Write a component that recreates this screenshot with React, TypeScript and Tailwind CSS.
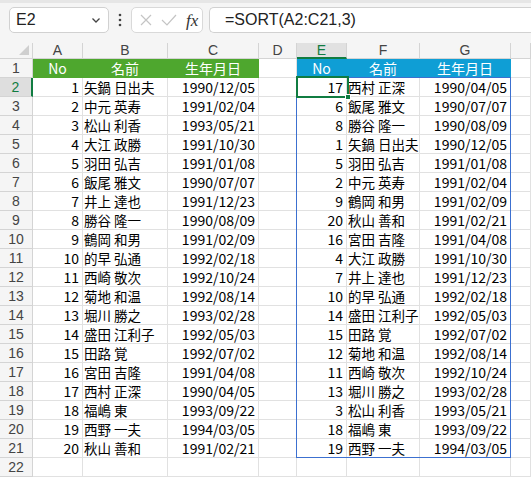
import React from "react";

type Row = [number, string, string];

const left: Row[] = [
  [1, "矢鍋 日出夫", "1990/12/05"],
  [2, "中元 英寿", "1991/02/04"],
  [3, "松山 利香", "1993/05/21"],
  [4, "大江 政勝", "1991/10/30"],
  [5, "羽田 弘吉", "1991/01/08"],
  [6, "飯尾 雅文", "1990/07/07"],
  [7, "井上 達也", "1991/12/23"],
  [8, "勝谷 隆一", "1990/08/09"],
  [9, "鶴岡 和男", "1991/02/09"],
  [10, "的早 弘通", "1992/02/18"],
  [11, "西崎 敬次", "1992/10/24"],
  [12, "菊地 和温", "1992/08/14"],
  [13, "堀川 勝之", "1993/02/28"],
  [14, "盛田 江利子", "1992/05/03"],
  [15, "田路 覚", "1992/07/02"],
  [16, "宮田 吉隆", "1991/04/08"],
  [17, "西村 正深", "1990/04/05"],
  [18, "福嶋 東", "1993/09/22"],
  [19, "西野 一夫", "1994/03/05"],
  [20, "秋山 善和", "1991/02/21"],
];

const right: Row[] = [...left].sort((a, b) => (a[2] < b[2] ? -1 : 1));

const colLetters = ["A", "B", "C", "D", "E", "F", "G", ""];

const cell = "border-r border-b border-[#e1e1e1] flex items-center whitespace-nowrap overflow-hidden";

function DataCells({ row }: { row: Row }) {
  return (
    <>
      <div className={`${cell} justify-end pr-[3px]`}>{row[0]}</div>
      <div className={`${cell} justify-start pl-[1px] text-[13.5px]`}>{row[1]}</div>
      <div className={`${cell} justify-end pr-[3px]`}>{row[2]}</div>
    </>
  );
}

function HeaderCells({ color }: { color: "green" | "blue" }) {
  const bg = color === "green" ? "bg-[#4ea72e]" : "bg-[#0f9ed5]";
  const c = `border-r border-b border-transparent flex items-center justify-center text-white ${bg}`;
  return (
    <>
      <div className={c}>No</div>
      <div className={c}>名前</div>
      <div className={c}>生年月日</div>
    </>
  );
}

export default function App() {
  const rows = Array.from({ length: 22 }, (_, i) => i + 1);
  return (
    <div
      className="w-[531px] h-[478px] overflow-hidden bg-white text-[14px] text-black"
      style={{ fontFamily: '"Noto Sans CJK JP", "Noto Sans", sans-serif' }}
    >
      {/* Formula bar */}
      <div className="h-[43px] bg-[#f5f5f5] border-t-[3px] border-[#e6e6e6] flex items-start pt-[4px]">
        <div className="ml-[9px] w-[100px] h-[26px] bg-white border border-[#d1d1d1] rounded-[5px] flex items-center justify-between pl-[6px] pr-[6px]">
          <span className="text-[16px] text-[#222]" style={{ fontFamily: '"Liberation Sans", sans-serif' }}>E2</span>
          <svg width="12" height="12" viewBox="0 0 12 12" fill="none" stroke="#444" strokeWidth="1.3">
            <path d="M2.5 4.5 L6 8 L9.5 4.5" />
          </svg>
        </div>
        <div className="w-[22px] h-[26px] flex items-center justify-center">
          <svg width="4" height="14" viewBox="0 0 4 14" fill="#444">
            <circle cx="2" cy="2" r="1.3" />
            <circle cx="2" cy="7" r="1.3" />
            <circle cx="2" cy="12" r="1.3" />
          </svg>
        </div>
        <div className="w-[72px] h-[26px] bg-white border border-[#d9d9d9] rounded-[5px] flex items-center pl-[6px] gap-[6px]">
          <svg width="16" height="16" viewBox="0 0 16 16" fill="none" stroke="#c4c4c4" strokeWidth="1.2">
            <path d="M3 3 L13 13 M13 3 L3 13" />
          </svg>
          <svg width="18" height="16" viewBox="0 0 18 16" fill="none" stroke="#c4c4c4" strokeWidth="1.2">
            <path d="M2 8 L7 13 L16 3" />
          </svg>
          <span
            className="italic text-[17px] text-[#333] leading-none ml-[2px]"
            style={{ fontFamily: '"Liberation Serif", serif' }}
          >
            fx
          </span>
        </div>
        <div className="ml-[6px] flex-1 h-[26px] bg-white border border-[#d1d1d1] rounded-l-[5px] border-r-0 flex items-center pl-[15px]">
          <span className="text-[16px] text-[#222]" style={{ fontFamily: '"Liberation Sans", sans-serif' }}>
            =SORT(A2:C21,3)
          </span>
        </div>
      </div>

      {/* Grid */}
      <div className="relative">
        <div className="grid grid-cols-[33px_50px_85px_91px_38px_50px_73px_91px_1fr] grid-rows-[16px_repeat(22,19px)]">
          {/* corner */}
          <div className="relative bg-[#f5f5f5] border-r border-b border-[#d4d4d4]">
            <svg className="absolute right-[3px] bottom-[3px]" width="10" height="10" viewBox="0 0 10 10">
              <path d="M10 0 L10 10 L0 10 Z" fill="#cfcfcf" />
            </svg>
          </div>
          {colLetters.map((l, i) =>
            l === "E" ? (
              <div
                key={i}
                className="bg-[#e1e1e1] border-r border-[#d4d4d4] border-b-2 border-b-[#107c41] flex items-center justify-center text-[#107c41] text-[14px]"
                style={{ fontFamily: '"Liberation Sans", sans-serif' }}
              >
                {l}
              </div>
            ) : (
              <div
                key={i}
                className="bg-[#f5f5f5] border-r border-b border-[#d4d4d4] flex items-center justify-center text-[#444] text-[14px]"
                style={{ fontFamily: '"Liberation Sans", sans-serif' }}
              >
                {l}
              </div>
            )
          )}
          {rows.map((r) => (
            <React.Fragment key={r}>
              {r === 2 ? (
                <div
                  className="bg-[#dedede] border-r-2 border-r-[#107c41] border-b border-b-[#d4d4d4] flex items-center justify-center text-[#107c41]"
                  style={{ fontFamily: '"Liberation Sans", sans-serif' }}
                >
                  {r}
                </div>
              ) : (
                <div
                  className="bg-[#f5f5f5] border-r border-b border-[#d4d4d4] flex items-center justify-center text-[#444]"
                  style={{ fontFamily: '"Liberation Sans", sans-serif' }}
                >
                  {r}
                </div>
              )}
              {r === 1 ? (
                <HeaderCells color="green" />
              ) : r <= 21 ? (
                <DataCells row={left[r - 2]} />
              ) : (
                <>
                  <div className={cell} />
                  <div className={cell} />
                  <div className={cell} />
                </>
              )}
              <div className={cell} />
              {r === 1 ? (
                <HeaderCells color="blue" />
              ) : r <= 21 ? (
                <DataCells row={right[r - 2]} />
              ) : (
                <>
                  <div className={cell} />
                  <div className={cell} />
                  <div className={cell} />
                </>
              )}
              <div className={cell} />
            </React.Fragment>
          ))}
        </div>
        {/* spill range border */}
        <div className="absolute left-[296px] top-[34px] w-[215px] h-[381px] border border-[#3c70d0] pointer-events-none" />
        {/* active cell */}
        <div className="absolute left-[296px] top-[33px] w-[53px] h-[22px] border-2 border-[#107c41] pointer-events-none">
          <div className="absolute -right-[4px] -bottom-[4px] w-[6px] h-[6px] bg-[#107c41] border border-white" />
        </div>
      </div>
    </div>
  );
}
